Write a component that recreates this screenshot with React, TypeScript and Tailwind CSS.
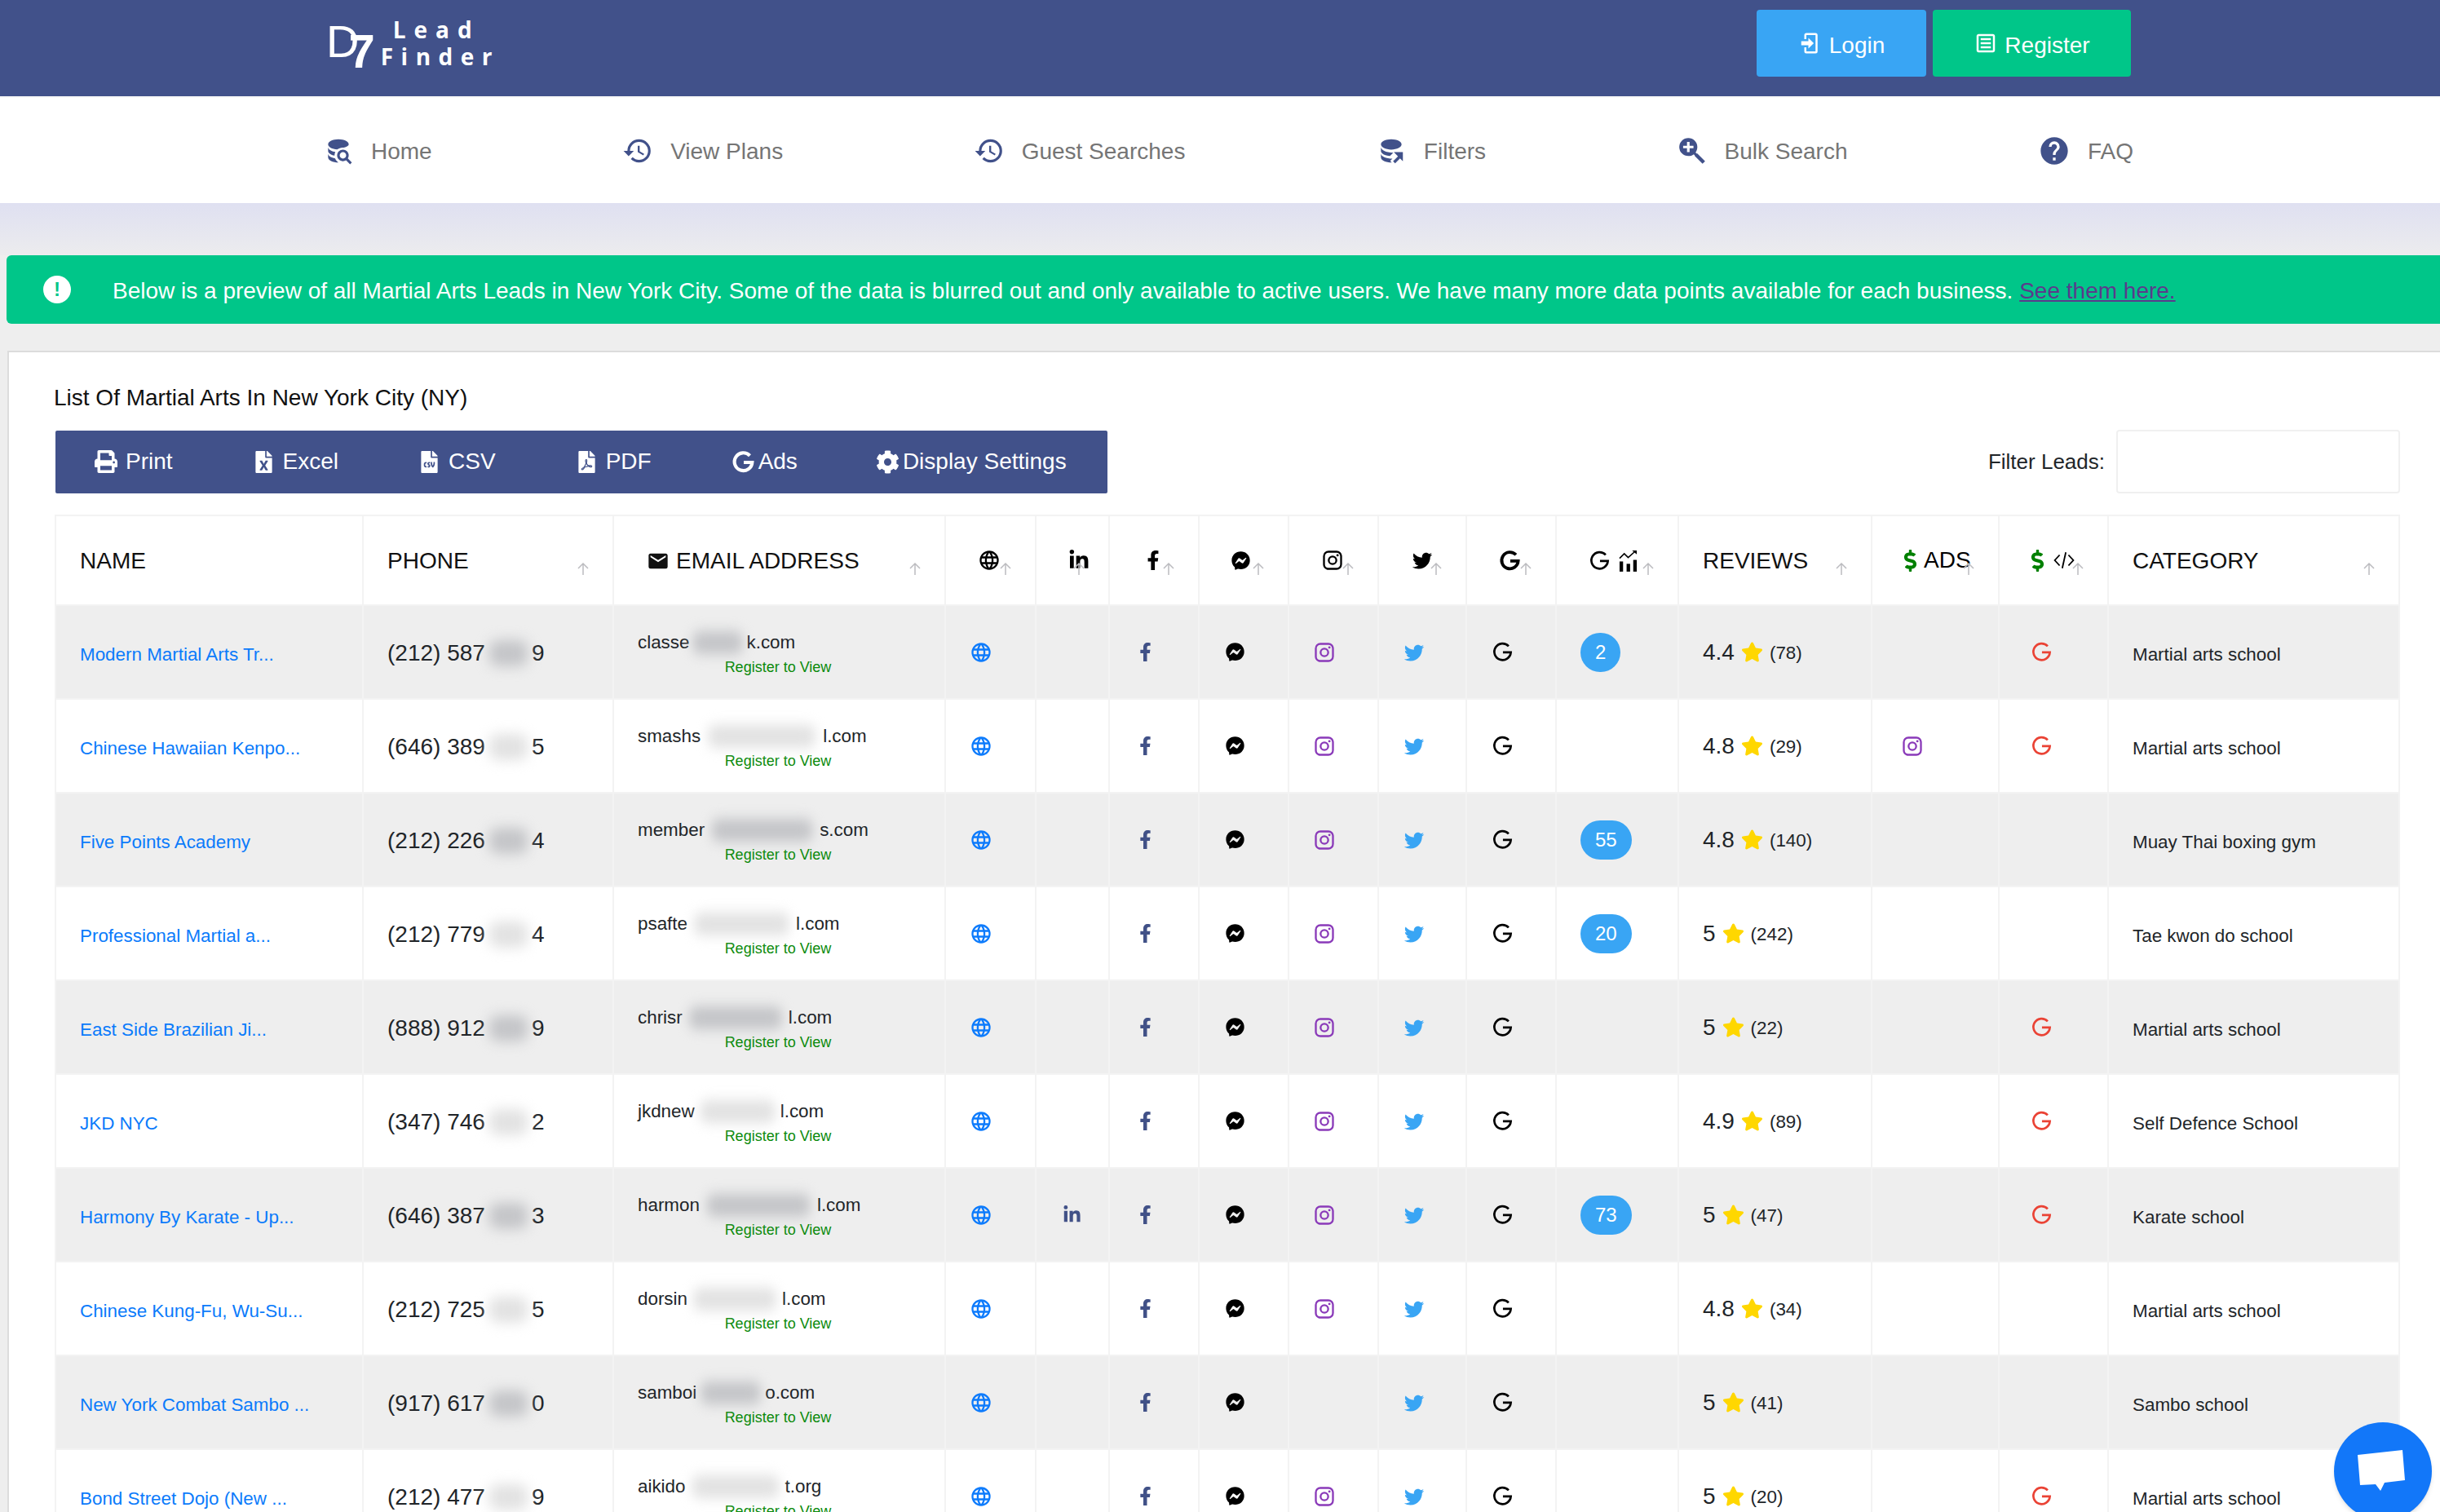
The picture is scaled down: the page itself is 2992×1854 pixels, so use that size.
import { FaCog, FaFacebookF, FaFacebookMessenger, FaFileCsv, FaFileExcel, FaFilePdf, FaLinkedinIn, FaPrint, FaStar, FaDollarSign } from "react-icons/fa";
import type { ReactNode } from "react";

const paths = {
  web: "M16.36,14C16.44,13.34 16.5,12.68 16.5,12C16.5,11.32 16.44,10.66 16.36,10H19.74C19.9,10.64 20,11.31 20,12C20,12.69 19.9,13.36 19.74,14M14.59,19.56C15.19,18.45 15.65,17.25 15.97,16H18.92C17.96,17.65 16.43,18.93 14.59,19.56M14.34,14H9.66C9.56,13.34 9.5,12.68 9.5,12C9.5,11.32 9.56,10.65 9.66,10H14.34C14.43,10.65 14.5,11.32 14.5,12C14.5,12.68 14.43,13.34 14.34,14M12,19.96C11.17,18.76 10.5,17.43 10.09,16H13.91C13.5,17.43 12.83,18.76 12,19.96M8,8H5.08C6.03,6.34 7.57,5.06 9.4,4.44C8.8,5.55 8.35,6.75 8,8M5.08,16H8C8.35,17.25 8.8,18.45 9.4,19.56C7.57,18.93 6.03,17.65 5.08,16M4.26,14C4.1,13.36 4,12.69 4,12C4,11.31 4.1,10.64 4.26,10H7.64C7.56,10.66 7.5,11.32 7.5,12C7.5,12.68 7.56,13.34 7.64,14M12,4.03C12.83,5.23 13.5,6.57 13.91,8H10.09C10.5,6.57 11.17,5.23 12,4.03M18.92,8H15.97C15.65,6.75 15.19,5.55 14.59,4.44C16.43,5.07 17.96,6.34 18.92,8M12,2C6.47,2 2,6.5 2,12A10,10 0 0,0 12,22A10,10 0 0,0 22,12A10,10 0 0,0 12,2Z",
  history: "M13.5,8H12V13L16.28,15.54L17,14.33L13.5,12.25V8M13,3A9,9 0 0,0 4,12H1L4.96,16.03L9,12H6A7,7 0 0,1 13,5A7,7 0 0,1 20,12A7,7 0 0,1 13,19C11.07,19 9.32,18.21 8.06,16.94L6.64,18.36C8.27,20 10.5,21 13,21A9,9 0 0,0 22,12A9,9 0 0,0 13,3",
  help: "M15.07,11.25L14.17,12.17C13.45,12.89 13,13.5 13,15H11V14.5C11,13.39 11.45,12.39 12.17,11.67L13.41,10.41C13.78,10.05 14,9.55 14,9C14,7.89 13.1,7 12,7A2,2 0 0,0 10,9H8A4,4 0 0,1 12,5A4,4 0 0,1 16,9C16,9.88 15.64,10.67 15.07,11.25M13,19H11V17H13M12,2A10,10 0 0,0 2,12A10,10 0 0,0 12,22A10,10 0 0,0 22,12C22,6.47 17.5,2 12,2Z",
  magnify: "M9,2A7,7 0 0,1 16,9C16,10.57 15.5,12 14.61,13.19L15.41,14H16L22,20L20,22L14,16V15.41L13.19,14.61C12,15.5 10.57,16 9,16A7,7 0 0,1 2,9A7,7 0 0,1 9,2M8,5V8H5V10H8V13H10V10H13V8H10V5H8Z",
  login: "M10,17.25V14H3V10H10V6.75L15.25,12L10,17.25M8,2H17A2,2 0 0,1 19,4V20A2,2 0 0,1 17,22H8A2,2 0 0,1 6,20V16H8V20H17V4H8V8H6V4A2,2 0 0,1 8,2Z",
  register: "M19 3H5C3.89 3 3 3.89 3 5V19C3 20.1 3.89 21 5 21H19C20.1 21 21 20.1 21 19V5C21 3.89 20.1 3 19 3M19 19H5V5H19V19M17 17H7V15H17V17M17 13H7V11H17V13M17 9H7V7H17V9Z",
  dbSearch: "M18.68,12.32C16.92,10.56 14.07,10.56 12.32,12.32C10.56,14.08 10.56,16.93 12.32,18.68C13.81,20.17 16.11,20.43 17.89,19.32L21,22.39L22.39,21L19.3,17.89C20.43,16.12 20.17,13.8 18.68,12.32M17.27,17.27C16.29,18.25 14.71,18.24 13.73,17.27C12.76,16.29 12.76,14.71 13.73,13.73C14.71,12.76 16.29,12.76 17.27,13.73C18.24,14.71 18.24,16.29 17.27,17.27M10.9,20.1C10.25,19.44 9.74,18.65 9.42,17.78C6.27,17.25 4,15.76 4,14V17C4,19.21 7.58,21 12,21C11.6,20.74 11.23,20.44 10.9,20.1M4,9V12C4,13.68 6.07,15.12 9,15.7C9,15.63 9,15.56 9,15.5C9,14.57 9.2,13.65 9.58,12.81C6.34,12.3 4,10.79 4,9M12,3C7.58,3 4,4.79 4,7C4,9.04 7.05,10.72 11,10.97C12.5,9.75 14.4,9.2 16.2,9.5C18.4,9 20,8.1 20,7C20,4.79 16.42,3 12,3Z",
  dbArrow: "M12,3C7.58,3 4,4.79 4,7C4,9.21 7.58,11 12,11C16.42,11 20,9.21 20,7C20,4.79 16.42,3 12,3ZM4,9V12C4,14 7,15.7 11,16L13.6,13.4C8,13.5 4,11.2 4,9ZM4,14V17C4,19.2 7.6,21 12.4,21L11.2,19.7L12.9,18C8,18 4,16.2 4,14ZM14,13H21V20L18.8,17.8L15,21.6L13.4,20L17.2,16.2Z",
  instagram: "M7.8,2H16.2C19.4,2 22,4.6 22,7.8V16.2A5.8,5.8 0 0,1 16.2,22H7.8C4.6,22 2,19.4 2,16.2V7.8A5.8,5.8 0 0,1 7.8,2M7.6,4A3.6,3.6 0 0,0 4,7.6V16.4C4,18.39 5.61,20 7.6,20H16.4A3.6,3.6 0 0,0 20,16.4V7.6C20,5.61 18.39,4 16.4,4H7.6M17.25,5.5A1.25,1.25 0 0,1 18.5,6.75A1.25,1.25 0 0,1 17.25,8A1.25,1.25 0 0,1 16,6.75A1.25,1.25 0 0,1 17.25,5.5M12,7A5,5 0 0,1 17,12A5,5 0 0,1 12,17A5,5 0 0,1 7,12A5,5 0 0,1 12,7M12,9A3,3 0 0,0 9,12A3,3 0 0,0 12,15A3,3 0 0,0 15,12A3,3 0 0,0 12,9Z",
  twitter: "M22.46,6C21.69,6.35 20.86,6.58 20,6.69C20.88,6.16 21.56,5.32 21.87,4.31C21.05,4.8 20.14,5.16 19.17,5.36C18.39,4.5 17.29,4 16.04,4C13.69,4 11.77,5.92 11.77,8.29C11.77,8.63 11.81,8.96 11.88,9.27C8.32,9.09 5.15,7.38 3.04,4.79C2.67,5.42 2.46,6.16 2.46,6.94C2.46,8.43 3.21,9.75 4.37,10.5C3.66,10.5 3,10.3 2.42,10C2.42,10 2.42,10 2.42,10.03C2.42,12.11 3.9,13.85 5.86,14.24C5.5,14.34 5.12,14.39 4.73,14.39C4.46,14.39 4.19,14.36 3.93,14.31C4.47,16 6.04,17.26 7.93,17.29C6.47,18.45 4.62,19.12 2.6,19.12C2.26,19.12 1.92,19.1 1.58,19.06C3.48,20.28 5.74,21 8.16,21C16.04,21 20.37,14.46 20.37,8.79C20.37,8.6 20.37,8.42 20.36,8.23C21.2,7.63 21.92,6.87 22.46,6Z",
  email: "M20,8L12,13L4,8V6L12,11L20,6M20,4H4C2.89,4 2,4.89 2,6V18A2,2 0 0,0 4,20H20A2,2 0 0,0 22,18V6C22,4.89 21.1,4 20,4Z",
};

function Mdi({ d, className }: { d: string; className: string }) {
  return (
    <svg viewBox="0 0 24 24" fill="currentColor" className={className}>
      <path d={d} />
    </svg>
  );
}

// thin google "G", drawn with a stroke so the header can use a heavier one
function GoogleG({ className, bold }: { className: string; bold?: boolean }) {
  return (
    <svg viewBox="0 0 24 24" fill="none" stroke="currentColor" strokeWidth={bold ? 3.4 : 2.4} className={className}>
      <path d="M18.6 5.6A9 9 0 1 0 21 12.4H12.4" />
    </svg>
  );
}

function ChartIcon() {
  return (
    <svg viewBox="0 0 24 28" className="ml-[4px] h-[27px] w-[23px] text-black" fill="currentColor">
      <rect x="1" y="15" width="4.5" height="13" />
      <rect x="10" y="18" width="4.5" height="10" />
      <rect x="18.5" y="13" width="4.5" height="15" />
      <path d="M1 11L7 5L12 10L21 2" fill="none" stroke="currentColor" strokeWidth="1.6" />
      <path d="M17 1H23V6Z" />
    </svg>
  );
}

function CodeIcon() {
  return (
    <svg viewBox="0 0 24 24" fill="none" stroke="currentColor" strokeWidth="1.7" className="h-[28px] w-[26px] text-black">
      <path d="M7 6L1.5 12L7 18M17 6L22.5 12L17 18M14 3L10 21" />
    </svg>
  );
}

function SortArrow() {
  return (
    <svg viewBox="0 0 14 15" fill="none" stroke="#bcbcc0" strokeWidth="1.5" className="absolute right-[29px] top-[57px] h-[15px] w-[14px]">
      <path d="M7 15V1M1 7L7 1L13 7" />
    </svg>
  );
}

const navItems = [
  { label: "Home", icon: <Mdi d={paths.dbSearch} className="h-[38px] w-[38px] -ml-[6px]" /> },
  { label: "View Plans", icon: <Mdi d={paths.history} className="h-[38px] w-[38px]" /> },
  { label: "Guest Searches", icon: <Mdi d={paths.history} className="h-[38px] w-[38px]" /> },
  { label: "Filters", icon: <Mdi d={paths.dbArrow} className="h-[38px] w-[38px]" /> },
  { label: "Bulk Search", icon: <Mdi d={paths.magnify} className="h-[38px] w-[38px]" /> },
  { label: "FAQ", icon: <Mdi d={paths.help} className="h-[40px] w-[40px]" /> },
];

const tools = [
  { label: "Print", icon: <FaPrint size={28} /> },
  { label: "Excel", icon: <FaFileExcel size={27} /> },
  { label: "CSV", icon: <FaFileCsv size={27} /> },
  { label: "PDF", icon: <FaFilePdf size={27} /> },
  { label: "Ads", icon: <GoogleG bold className="-mr-[6px] h-[29px] w-[29px]" /> },
  { label: "Display Settings", icon: <FaCog size={29} className="-ml-[2px] -mr-[6px]" /> },
];

const widths = ["w-[377px]", "w-[307px]", "w-[407px]", "w-[111px]", "w-[90px]", "w-[110px]", "w-[110px]", "w-[110px]", "w-[108px]", "w-[110px]", "w-[150px]", "w-[237px]", "w-[156px]", "w-[134px]", "w-[357px]"];

type Lead = {
  name: string;
  phone: string;
  last: string;
  pre: string;
  blob: string;
  post: string;
  rating: string;
  count: number;
  category: string;
  badge?: number;
  linkedin?: boolean;
  noInsta?: boolean;
  adsInsta?: boolean;
  redG?: boolean;
};

const leads: Lead[] = [
  { name: "Modern Martial Arts Tr...", phone: "(212) 587", last: "9", pre: "classe", blob: "w-[70px]", post: "k.com", rating: "4.4", count: 78, category: "Martial arts school", badge: 2, redG: true },
  { name: "Chinese Hawaiian Kenpo...", phone: "(646) 389", last: "5", pre: "smashs", blob: "w-[150px]", post: "l.com", rating: "4.8", count: 29, category: "Martial arts school", adsInsta: true, redG: true },
  { name: "Five Points Academy", phone: "(212) 226", last: "4", pre: "member", blob: "w-[141px]", post: "s.com", rating: "4.8", count: 140, category: "Muay Thai boxing gym", badge: 55 },
  { name: "Professional Martial a...", phone: "(212) 779", last: "4", pre: "psafte", blob: "w-[133px]", post: "l.com", rating: "5", count: 242, category: "Tae kwon do school", badge: 20 },
  { name: "East Side Brazilian Ji...", phone: "(888) 912", last: "9", pre: "chrisr", blob: "w-[130px]", post: "l.com", rating: "5", count: 22, category: "Martial arts school", redG: true },
  { name: "JKD NYC", phone: "(347) 746", last: "2", pre: "jkdnew", blob: "w-[105px]", post: "l.com", rating: "4.9", count: 89, category: "Self Defence School", redG: true },
  { name: "Harmony By Karate - Up...", phone: "(646) 387", last: "3", pre: "harmon", blob: "w-[144px]", post: "l.com", rating: "5", count: 47, category: "Karate school", badge: 73, linkedin: true, redG: true },
  { name: "Chinese Kung-Fu, Wu-Su...", phone: "(212) 725", last: "5", pre: "dorsin", blob: "w-[116px]", post: "l.com", rating: "4.8", count: 34, category: "Martial arts school" },
  { name: "New York Combat Sambo ...", phone: "(917) 617", last: "0", pre: "samboi", blob: "w-[84px]", post: "o.com", rating: "5", count: 41, category: "Sambo school", noInsta: true },
  { name: "Bond Street Dojo (New ...", phone: "(212) 477", last: "9", pre: "aikido", blob: "w-[122px]", post: "t.org", rating: "5", count: 20, category: "Martial arts school", redG: true },
];

const thCls = "relative border-2 border-[#f3f3f3] pl-[29px] text-left align-top pt-[34px] text-[28px] font-normal text-[#111]";
const iconTh = "relative border-2 border-[#f3f3f3] pl-[39px] align-top pt-[40px] font-normal text-black";
const tdCls = "border-2 border-[#f3f3f3] pl-[29px] align-middle";

function Th({ children, sort = true }: { children: ReactNode; sort?: boolean }) {
  return (
    <th className={thCls}>
      {children}
      {sort && <SortArrow />}
    </th>
  );
}

function IconTh({ children }: { children: ReactNode }) {
  return (
    <th className={iconTh}>
      <div className="flex h-[28px] items-center gap-[6px]">{children}</div>
      <SortArrow />
    </th>
  );
}

function IconBox({ children }: { children: ReactNode }) {
  return <div className="flex h-[28px] w-[28px] items-center justify-center">{children}</div>;
}

function Row({ lead, striped }: { lead: Lead; striped: boolean }) {
  const blur = striped ? "bg-[#c4c5c8]" : "bg-[#e2e2e2]";
  return (
    <tr className={striped ? "h-[115px] bg-[#eeeeee]" : "h-[115px] bg-white"}>
      <td className={tdCls}>
        <a className="block pt-[7px] text-[22.4px] text-[#0b7bfb]">{lead.name}</a>
      </td>
      <td className={tdCls}>
        <div className="flex items-center pt-[2px] text-[28px] text-[#212529]">
          {lead.phone}
          <span className={`mx-[5px] inline-block h-[32px] w-[47px] rounded-[10px] blur-[8px] ${blur}`} />
          {lead.last}
        </div>
      </td>
      <td className={`${tdCls} pr-[32px] pt-[5px]`}>
        <div className="flex items-center text-[22.4px] leading-[30px] text-[#212529]">
          {lead.pre}
          <span className={`inline-block h-[28px] scale-x-[0.88] rounded-[10px] blur-[8px] ${lead.blob} ${blur}`} />
          {lead.post}
        </div>
        <div className="mt-[2px] text-center text-[18px] leading-[26px] text-[#0a8a0a]">Register to View</div>
      </td>
      <td className={tdCls}>
        <IconBox><Mdi d={paths.web} className="h-[28px] w-[28px] text-[#0d7bfc]" /></IconBox>
      </td>
      <td className={tdCls}>
        {lead.linkedin && <IconBox><FaLinkedinIn size={23} className="text-[#415187]" /></IconBox>}
      </td>
      <td className={tdCls}>
        <IconBox><FaFacebookF size={23} className="text-[#415187]" /></IconBox>
      </td>
      <td className={tdCls}>
        <IconBox><FaFacebookMessenger size={23} className="text-black" /></IconBox>
      </td>
      <td className={tdCls}>
        {!lead.noInsta && <IconBox><Mdi d={paths.instagram} className="h-[28px] w-[28px] text-[#8a3ab9]" /></IconBox>}
      </td>
      <td className={tdCls}>
        <IconBox><Mdi d={paths.twitter} className="h-[28px] w-[28px] text-[#39a5f4]" /></IconBox>
      </td>
      <td className={tdCls}>
        <IconBox><GoogleG className="h-[27px] w-[27px] text-black" /></IconBox>
      </td>
      <td className={tdCls}>
        {lead.badge && (
          <span className="inline-flex h-[48px] items-center rounded-full bg-[#39a5f4] px-[18px] text-[24px] text-white">
            {lead.badge}
          </span>
        )}
      </td>
      <td className={tdCls}>
        <div className="flex items-center gap-[8px] text-[28px] text-[#212529]">
          {lead.rating}
          <FaStar size={27} className="text-[#ffd700]" />
          <span className="pt-[3px] text-[22.4px]">({lead.count})</span>
        </div>
      </td>
      <td className={`${tdCls} !pl-[35px]`}>
        {lead.adsInsta && <IconBox><Mdi d={paths.instagram} className="h-[28px] w-[28px] text-[#8a3ab9]" /></IconBox>}
      </td>
      <td className={`${tdCls} !pl-[37px]`}>
        {lead.redG && <IconBox><GoogleG className="h-[27px] w-[27px] text-[#ea4335]" /></IconBox>}
      </td>
      <td className={`${tdCls} pt-[7px] text-[22.4px] text-[#212529]`}>{lead.category}</td>
    </tr>
  );
}

export default function App() {
  return (
    <div className="relative h-[1854px] overflow-hidden bg-[#eeeeee] font-['Liberation_Sans',Arial,sans-serif]">
      {/* Top bar */}
      <header className="flex h-[118px] items-start justify-between bg-[#41518a] pl-[400px] pr-[379px]">
        <div className="flex items-start pt-[15px] font-['Open_Sans',sans-serif] font-bold text-white">
          <div className="flex font-['Liberation_Sans',sans-serif] font-normal">
            <span className="text-[56px] leading-[72px]">D</span>
            <span className="-ml-[13px] mt-[12px] text-[58px] font-bold leading-[72px]">7</span>
          </div>
          <div className="flex flex-col pt-[3px]">
            <span className="ml-[22px] text-[28px] leading-[36px] tracking-[10px]">Lead</span>
            <span className="ml-[7px] text-[28px] leading-[30px] tracking-[9.5px]">Finder</span>
          </div>
        </div>
        <div className="flex gap-[8px] pt-[12px] text-[28px] text-white">
          <button className="flex h-[82px] w-[208px] items-center justify-center gap-[8px] rounded-[4px] bg-[#39a5f4] pt-[5px]">
            <Mdi d={paths.login} className="-mt-[5px] h-[30px] w-[30px]" />
            Login
          </button>
          <button className="flex h-[82px] w-[243px] items-center justify-center gap-[8px] rounded-[4px] bg-[#00c689] pt-[5px]">
            <Mdi d={paths.register} className="-mt-[5px] h-[30px] w-[30px]" />
            Register
          </button>
        </div>
      </header>

      {/* Main nav */}
      <nav className="flex h-[131px] items-center justify-between border-t-2 border-[#f7f7f7] bg-white pl-[402px] pr-[376px]">
        {navItems.map((item) => (
          <a key={item.label} className="flex items-center gap-[21px] text-[28px] text-[#757575]">
            <span className="text-[#41518a]">{item.icon}</span>
            <span className="pt-[2px]">{item.label}</span>
          </a>
        ))}
      </nav>

      <div className="h-[64px] bg-linear-to-b from-[#dfe0f1] to-[#ececee]" />

      {/* Notice */}
      <div className="ml-[8px] flex h-[84px] items-center rounded-l-[6px] bg-[#00c689] pl-[45px] text-[28px] text-white">
        <span className="mr-[51px] flex h-[34px] w-[34px] items-center justify-center rounded-full bg-white text-[24px] font-bold leading-none text-[#00c689]">
          !
        </span>
        <span className="pt-[3px]">
          Below is a preview of all Martial Arts Leads in New York City. Some of the data is blurred out and only available to active users. We have many more data points available for each business.{" "}
          <a className="text-[#5b3b8c] underline">See them here.</a>
        </span>
      </div>

      {/* Results */}
      <section className="ml-[9px] mt-[33px] border-l-2 border-t-2 border-[#dcdcdc] bg-white pl-[56px] pr-[49px] pt-[40px]">
        <h1 className="-ml-px text-[28px] font-normal leading-[32px] text-[#111]">List Of Martial Arts In New York City (NY)</h1>
        <div className="mt-[23px] flex items-center justify-between">
          <div className="ml-px flex h-[77px] w-[1290px] items-center rounded-[2px] bg-[#41518a] text-[28px] text-white">
            {tools.map((tool) => (
              <button key={tool.label} className="flex shrink-0 items-center gap-[10px] whitespace-nowrap pl-[48px] pr-[50px]">
                {tool.icon}
                {tool.label}
              </button>
            ))}
          </div>
          <div className="flex items-center gap-[14px] text-[26px] text-[#212529]">
            Filter Leads:
            <input className="h-[78px] w-[348px] rounded-[4px] border-2 border-[#f0f0f0] bg-white" />
          </div>
        </div>

        <table className="mt-[26px] w-[2874px] table-fixed border-collapse">
          <colgroup>
            {widths.map((w, i) => (
              <col key={i} className={w} />
            ))}
          </colgroup>
          <thead>
            <tr className="h-[110px] bg-white">
              <Th sort={false}>NAME</Th>
              <Th>PHONE</Th>
              <Th>
                <span className="flex items-center gap-[8px] pl-[11px]">
                  <Mdi d={paths.email} className="h-[28px] w-[28px]" />
                  EMAIL ADDRESS
                </span>
              </Th>
              <IconTh><Mdi d={paths.web} className="h-[28px] w-[28px]" /></IconTh>
              <IconTh><FaLinkedinIn size={26} /></IconTh>
              <IconTh><IconBox><FaFacebookF size={24} /></IconBox></IconTh>
              <IconTh><FaFacebookMessenger size={23} /></IconTh>
              <IconTh><Mdi d={paths.instagram} className="h-[28px] w-[28px]" /></IconTh>
              <IconTh><Mdi d={paths.twitter} className="h-[28px] w-[28px]" /></IconTh>
              <IconTh><GoogleG bold className="h-[27px] w-[27px]" /></IconTh>
              <IconTh>
                <GoogleG className="h-[27px] w-[27px]" />
                <ChartIcon />
              </IconTh>
              <Th>REVIEWS</Th>
              <th className={iconTh}>
                <div className="-ml-[6px] flex h-[28px] items-center gap-[3px] text-[28px]">
                  <FaDollarSign size={27} className="text-[#008000]" />
                  ADS
                </div>
                <SortArrow />
              </th>
              <IconTh>
                <FaDollarSign size={27} className="-ml-[6px] text-[#008000]" />
                <CodeIcon />
              </IconTh>
              <Th>CATEGORY</Th>
            </tr>
          </thead>
          <tbody>
            {leads.map((lead, i) => (
              <Row key={lead.name} lead={lead} striped={i % 2 === 0} />
            ))}
          </tbody>
        </table>
      </section>

      {/* Chat launcher */}
      <button className="absolute right-[10px] top-[1744px] flex h-[120px] w-[120px] items-start justify-center rounded-full bg-[#1277f9] pr-[4px] pt-[34px] shadow-md">
        <svg viewBox="0 0 60 54" className="h-[54px] w-[60px]" fill="white">
          <path d="M1 6L56 0L59 37L34 40L29 50L23 42L4 43Z" />
        </svg>
      </button>
    </div>
  );
}
